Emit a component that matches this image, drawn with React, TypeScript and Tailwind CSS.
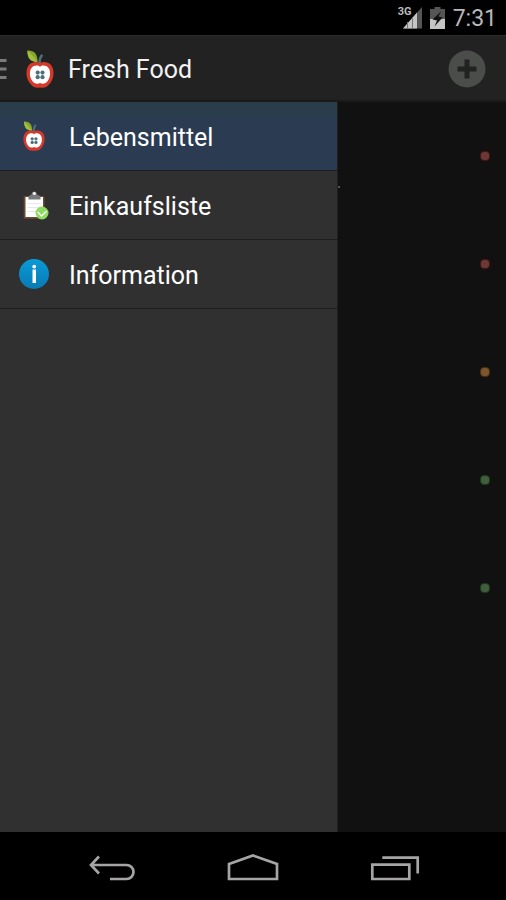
import React from "react";

const Apple = ({ className }: { className: string }) => (
  <svg viewBox="0 0 28 38" className={className} aria-hidden="true">
    <path d="M1.5 0.5C8 0.2 11.8 4 11.5 12C5 12 1.2 8.5 1.5 0.5Z" fill="#86a52c" />
    <path d="M1.5 0.5C5 4 8 7 11.5 12C5 12 1.2 8.5 1.5 0.5Z" fill="#a3bd3c" />
    <path d="M13.5 14C13.3 9.5 14.2 7 16.3 4.8" fill="none" stroke="#4d7078" strokeWidth="2.6" />
    <path
      d="M14 13C17 11.5 22 11.6 25 15C28.5 19 28.2 27 25 32C22 37 18 38.5 14 37.5C10 38.5 6 37 3 32C-0.2 27 -0.5 19 3 15C6 11.6 11 11.5 14 13Z"
      fill="#d5392c"
    />
    <path
      d="M14 17C15.5 15 20 15 22.5 18C24.8 21 24.5 27 22 30.5C20 33.8 16.5 34.5 14 33C11.5 34.5 8 33.8 6 30.5C3.5 27 3.2 21 5.5 18C8 15 12.5 15 14 17Z"
      fill="#fff"
    />
    <g fill="#4d7078">
      <circle cx="11.7" cy="22.6" r="2.1" />
      <circle cx="16.5" cy="22.6" r="2.1" />
      <circle cx="11.7" cy="27.2" r="2.1" />
      <circle cx="16.5" cy="27.2" r="2.1" />
    </g>
  </svg>
);

const Clipboard = () => (
  <svg viewBox="0 0 30 30" className="size-[30px]" aria-hidden="true">
    <rect x="4.7" y="6" width="20.8" height="22.7" rx="1" fill="#6b4a30" />
    <path d="M6.5 7H24V27H6.5Z" fill="#fff" />
    <path d="M8.500 13.500H22M8.500 17.500H22M8.500 21.500H18" stroke="#e6e9eb" />
    <path d="M9.500 9.500V7C9.500 5.500 11.500 5.500 12.500 4.500C12.700 0.500 17.800 0.500 18 4.500C19 5.500 21.500 5.500 21.500 7V9.500Z" fill="#777a7c" />
    <circle cx="15.3" cy="3.5" r="1.5" fill="#fff" />
    <circle cx="23" cy="23" r="6.5" fill="#8fdc62" />
    <path d="M18.700 22L22.500 26L27.700 21" fill="none" stroke="#fff" strokeWidth="1.3" />
  </svg>
);

const Info = () => (
  <svg viewBox="0 0 30 30" className="size-[30px]" aria-hidden="true">
    <defs>
      <linearGradient id="info" x1="0" y1="0" x2="0" y2="1">
        <stop offset="0" stopColor="#0a9ad6" />
        <stop offset="1" stopColor="#087bb4" />
      </linearGradient>
    </defs>
    <circle cx="15" cy="15" r="15" fill="url(#info)" />
    <circle cx="15.2" cy="7.6" r="1.9" fill="#fff" />
    <path d="M13.500 10.500H17V24H13.500Z" fill="#fff" />
  </svg>
);

const items = [
  { label: "Lebensmittel", icon: <Apple className="h-[30px] w-[22px]" />, active: true },
  { label: "Einkaufsliste", icon: <Clipboard />, active: false },
  { label: "Information", icon: <Info />, active: false },
];

const dots = [
  "bg-[#6b3a38] border-[#481210]",
  "bg-[#6b3a38] border-[#481210]",
  "bg-[#7d552f] border-[#4c2c0c]",
  "bg-[#415f3d] border-[#1c3a1b]",
  "bg-[#415f3d] border-[#1c3a1b]",
];

const App = () => {
  return (
    <div className="flex min-h-screen flex-col bg-[#111111] font-[Roboto,sans-serif] text-white">
      <div className="flex h-[35px] items-center justify-end gap-2 bg-black pr-[9px] text-[#b9b9b9]">
        <div className="relative">
          <svg viewBox="0 0 24 24" className="size-6" aria-hidden="true">
            <path d="M5 22.5L24 1V22.5Z" fill="#555" />
            <path d="M5 22.5L19 6.500V22.5Z" fill="#c4c4c4" />
            <path d="M9.5 16V22.5M14.5 11V22.5" stroke="#777" />
          </svg>
          <span className="absolute top-0 left-0 text-[11px] leading-3 font-bold">3G</span>
        </div>
        <svg viewBox="0 0 15 22" className="h-[22px] w-[15px]" aria-hidden="true">
          <path d="M4.5 0H10.5V2H15V12H0V2H4.5Z" fill="#555" />
          <path d="M0 12H15V22H0Z" fill="#c4c4c4" />
          <path d="M11 4.5L2.500 12.500L7 13.500L4.500 19.500L12.500 10.500L8.500 9.500Z" fill="#111" />
        </svg>
        <span className="pt-0.5 text-[23px] leading-7">7:31</span>
      </div>

      <header className="flex h-[67px] items-center border-t border-b-2 border-t-[#2c2c2c] border-b-[#1a1a1a] bg-[#222222] pt-0.5 pr-5">
        <button className="flex items-center" aria-label="Menu">
          <svg viewBox="0 0 7 20" className="h-5 w-[7px]" aria-hidden="true">
            <path d="M0 1.5H6.5M0 10H6.5M0 18.5H6.5" stroke="#7b7b7b" strokeWidth="3" />
          </svg>
        </button>
        <Apple className="ml-[19px] h-[38px] w-7" />
        <h1 className="ml-[14px] grow pt-0.5 text-[25px] leading-8 text-[#f3f3f3]">Fresh Food</h1>
        <button aria-label="Add">
          <svg viewBox="0 0 38 38" className="size-[38px]" aria-hidden="true">
            <circle cx="19" cy="19" r="18.5" fill="#4b4d4b" />
            <path d="M9.5 19H28.5M19 9.5V28.5" stroke="#222222" strokeWidth="5" />
          </svg>
        </button>
      </header>

      <main className="flex grow">
        <nav className="w-2/3 bg-[#303030]">
          <ul>
            {items.map((item) => (
              <li key={item.label} className="border-b border-[#1d1f1f]">
                <a
                  href="#"
                  className={
                    item.active
                      ? "flex h-[68px] items-center bg-[#2a3b52] bg-linear-to-b from-[#2a3d4a] from-20% to-[#2a3b52] to-25%"
                      : "flex h-[68px] items-center"
                  }
                >
                  <span className="flex w-[69px] justify-center pr-px">{item.icon}</span>
                  <span className="pt-1 text-[25px] leading-8">{item.label}</span>
                </a>
              </li>
            ))}
          </ul>
        </nav>
        <ul className="relative grow border-l border-[#1f1f1f]">
          <li className="absolute top-[84px] left-0 size-[2px] bg-[#555]" />
          {dots.map((dot, i) => (
            <li key={i} className="flex h-[108px] items-center justify-end pr-4">
              <span className={`size-[10px] rounded-[4px] border ${dot}`} />
            </li>
          ))}
        </ul>
      </main>

      <footer className="flex h-[68px] items-center justify-center bg-black">
        <button className="flex w-[28%] justify-center" aria-label="Back">
          <svg viewBox="0 0 48 32" className="h-8 w-12" fill="none" stroke="#a6a4a5" strokeWidth="2.7" aria-hidden="true">
            <path d="M12 6.5L4 15L12 23.5M4 15H39.5A7 7 0 0 1 39.5 29H23" />
          </svg>
        </button>
        <button className="flex w-[28%] justify-center" aria-label="Home">
          <svg viewBox="0 0 52 32" className="h-8 w-[52px]" fill="none" stroke="#a6a4a5" strokeWidth="2.7" aria-hidden="true">
            <path d="M2 14L26 5.5L50 14V29H2Z" />
          </svg>
        </button>
        <button className="flex w-[28%] justify-center" aria-label="Recent apps">
          <svg viewBox="0 0 50 32" className="h-8 w-[50px]" fill="none" stroke="#a6a4a5" strokeWidth="2.7" aria-hidden="true">
            <path d="M2.3 14.7H39.3V29H2.3ZM12.3 7.7H47.7V23.5" />
          </svg>
        </button>
      </footer>
    </div>
  );
};

export default App;
